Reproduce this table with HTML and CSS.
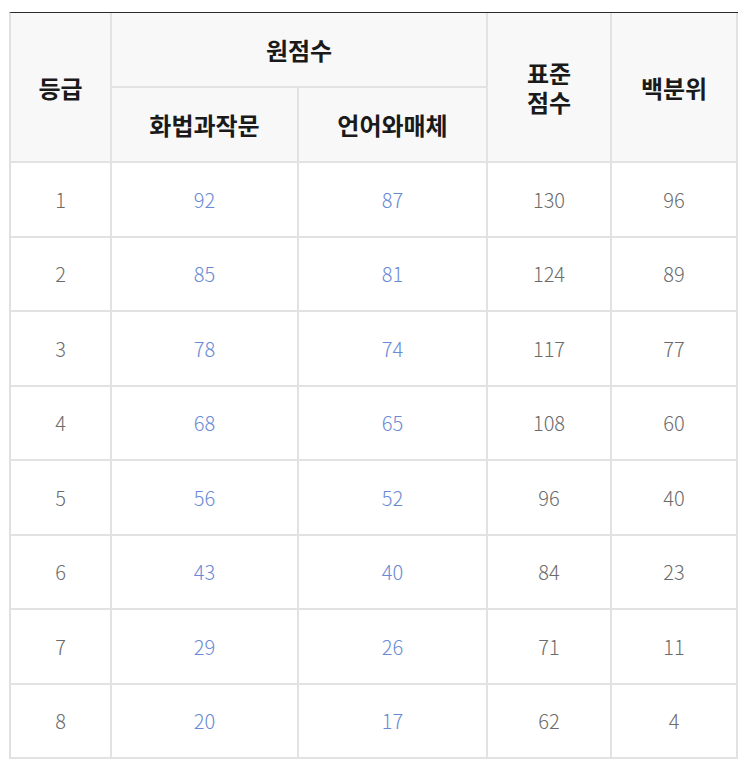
FILE: index.html
```html
<!DOCTYPE html>
<html lang="ko">
<head>
<meta charset="utf-8">
<link rel="stylesheet" href="styles.css">
</head>
<body>
<div class="wrap">
<table class="score">
<colgroup>
<col class="c1"><col class="c2"><col class="c3"><col class="c4"><col class="c5">
</colgroup>
<thead>
<tr class="h1">
<th rowspan="2">등급</th>
<th colspan="2">원점수</th>
<th rowspan="2">표준<br>점수</th>
<th rowspan="2">백분위</th>
</tr>
<tr class="h2">
<th>화법과작문</th>
<th>언어와매체</th>
</tr>
</thead>
<tbody>
<tr><td>1</td><td class="raw">92</td><td class="raw">87</td><td>130</td><td>96</td></tr>
<tr><td>2</td><td class="raw">85</td><td class="raw">81</td><td>124</td><td>89</td></tr>
<tr><td>3</td><td class="raw">78</td><td class="raw">74</td><td>117</td><td>77</td></tr>
<tr><td>4</td><td class="raw">68</td><td class="raw">65</td><td>108</td><td>60</td></tr>
<tr><td>5</td><td class="raw">56</td><td class="raw">52</td><td>96</td><td>40</td></tr>
<tr><td>6</td><td class="raw">43</td><td class="raw">40</td><td>84</td><td>23</td></tr>
<tr><td>7</td><td class="raw">29</td><td class="raw">26</td><td>71</td><td>11</td></tr>
<tr><td>8</td><td class="raw">20</td><td class="raw">17</td><td>62</td><td>4</td></tr>
</tbody>
</table>
</div>
</body>
</html>
```
FILE: styles.css
```css
html, body {
  margin: 0;
  padding: 0;
  background: #fff;
}
.wrap {
  padding: 12px 0 0 9px;
}
.score {
  border-collapse: separate;
  border-spacing: 0;
  table-layout: fixed;
  width: 729px;
  border-top: 1px solid #2b2b2b;
  border-left: 2px solid #e0e0e0;
  font-family: "Noto Sans CJK KR", "Noto Sans", sans-serif;
}
.c1 { width: 101px; }
.c2 { width: 187px; }
.c3 { width: 189px; }
.c4 { width: 124px; }
.c5 { width: 126px; }
.score th,
.score td {
  box-sizing: border-box;
  padding: 0;
  text-align: center;
  vertical-align: middle;
  border-right: 2px solid #e2e2e2;
  border-bottom: 2px solid #e2e2e2;
}
.score th {
  background: #f8f8f8;
  color: #1a1a1a;
  font-size: 24px;
  font-weight: 700;
  line-height: 29px;
}
.h1 th { height: 75px; }
.h2 th { height: 75px; }
.score td {
  height: 74.5px;
  font-size: 20px;
  font-weight: 300;
  color: #6b6b6b;
}
.score td.raw {
  color: #6a8ad6;
}
```
